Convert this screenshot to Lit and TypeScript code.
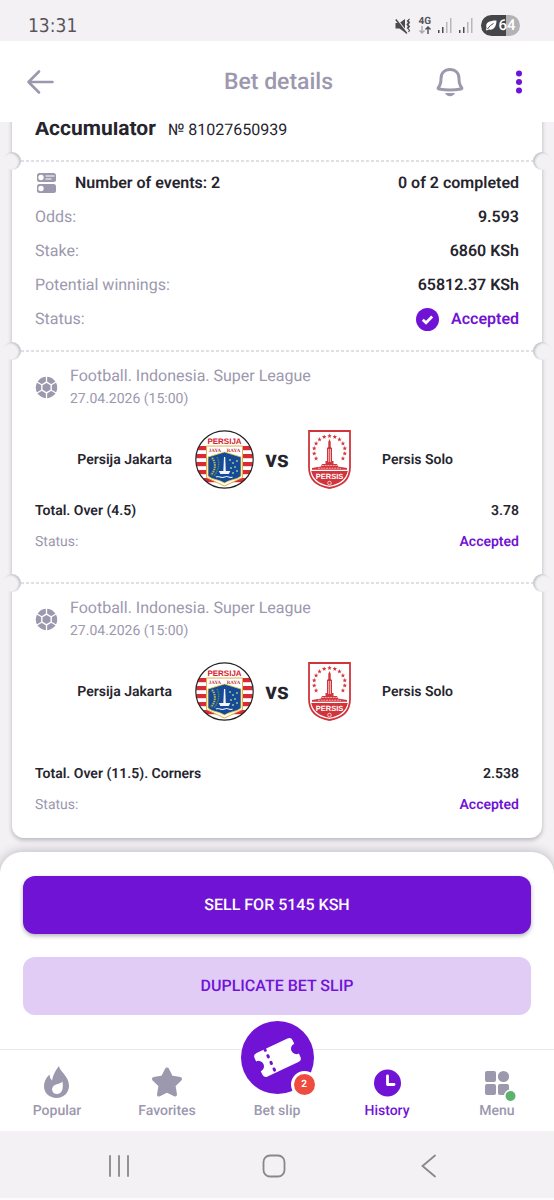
import { LitElement, html, css, svg, nothing } from "lit";
import { customElement, property } from "lit/decorators.js";

interface BetEvent {
  league: string;
  date: string;
  home: string;
  away: string;
  market: string;
  odds: string;
  status: string;
  tall?: boolean;
}

const EVENTS: BetEvent[] = [
  {
    league: "Football. Indonesia. Super League",
    date: "27.04.2026 (15:00)",
    home: "Persija Jakarta",
    away: "Persis Solo",
    market: "Total. Over (4.5)",
    odds: "3.78",
    status: "Accepted",
  },
  {
    league: "Football. Indonesia. Super League",
    date: "27.04.2026 (15:00)",
    home: "Persija Jakarta",
    away: "Persis Solo",
    market: "Total. Over (11.5). Corners",
    odds: "2.538",
    status: "Accepted",
    tall: true,
  },
];

const polar = (r: number, deg: number, cx = 0, cy = 0) => {
  const a = (deg * Math.PI) / 180;
  return `${(cx + r * Math.cos(a)).toFixed(2)},${(cy + r * Math.sin(a)).toFixed(2)}`;
};

const star = (cx: number, cy: number, r: number) =>
  Array.from({ length: 10 }, (_, i) => polar(i % 2 ? r * 0.42 : r, -90 + i * 36, cx, cy)).join(" ");

const base = css`
  :host {
    display: block;
    font-family: Roboto, "Liberation Sans", sans-serif;
    text-rendering: geometricPrecision;
  }
  * {
    box-sizing: border-box;
  }
  svg {
    display: block;
    overflow: visible;
  }
  button {
    font: inherit;
    color: inherit;
    background: none;
    border: 0;
    padding: 0;
    margin: 0;
    cursor: pointer;
    text-rendering: inherit;
  }
`;

@customElement("status-bar")
export class StatusBar extends LitElement {
  static styles = [
    base,
    css`
      .bar {
        display: flex;
        align-items: center;
        justify-content: space-between;
        height: 41px;
        padding: 10px 34px 0 28px;
        background: #f3f1f4;
        color: #56555a;
      }
      .time {
        font: 19px/22px "DejaVu Sans Condensed", "DejaVu Sans", sans-serif;
      }
      .icons {
        display: flex;
        align-items: center;
        gap: 7px;
      }
      .net {
        display: grid;
        justify-items: center;
        font-size: 10px;
        line-height: 9px;
        font-weight: 700;
      }
      .battery {
        display: flex;
        align-items: center;
        justify-content: center;
        gap: 1px;
        width: 39px;
        height: 21px;
        margin-left: 1px;
        border-radius: 11px;
        background: linear-gradient(90deg, #464549 64%, #b3b2b5 64%);
        color: #fff;
        font-size: 15px;
        font-weight: 500;
        line-height: 21px;
      }
    `,
  ];

  private signal(full: number) {
    return html`<svg width="14" height="15" viewBox="0 0 14 15" aria-hidden="true">
      ${[3, 6, 11, 15].map(
        (h, i) => svg`<rect x=${i * 4} y=${15 - h} width="1.5" height=${h} fill=${i < full ? "#4b4a4e" : "#b9b7bb"}/>`
      )}
    </svg>`;
  }

  render() {
    return html`<div class="bar">
      <time class="time">13:31</time>
      <div class="icons">
        <svg width="16" height="16" viewBox="0 0 16 16" fill="none" stroke="#4b4a4e" aria-label="Muted">
          <path d="M.5 5h4L10 1v13.500L4.500 10.500h-4z" fill="#4b4a4e" stroke="none" />
          <path d="M1.500 1l11 14" stroke="#f3f1f4" stroke-width="1.500" />
          <path d="M.8 1.500l11 14" stroke-width="1.500" />
          <path d="M12 2.500l1.500 2-1.500 2 1.500 2-1.500 2M14.500 1l-1.500 1.500 1.500 2-1.500 2 1.500 2-1.500 2 1.500 2-1 1.500" stroke-width="1.100" />
        </svg>
        <div class="net">
          <span>4G</span>
          <svg width="12" height="8" viewBox="0 0 12 8" fill="none" stroke-width="1.400">
            <path d="M3 0v7M.5 4.500L3 7l2.500-2.500" stroke="#aaa8ac" />
            <path d="M9 8V1M6.500 3.500L9 1l2.500 2.500" stroke="#4b4a4e" />
          </svg>
        </div>
        ${this.signal(2)} ${this.signal(2)}
        <div class="battery">
          <svg width="12" height="11" viewBox="0 0 12 11" aria-hidden="true">
            <path d="M1.500 7.500C0 3 4 .5 11.500.5 11.500 6 9 10.500 4 9.500L1 10.500z" fill="#fff" />
            <path d="M2.500 9C4.500 6 6 5 8.500 3.500" stroke="#464549" fill="none" />
          </svg>
          <span>64</span>
        </div>
      </div>
    </div>`;
  }
}

@customElement("page-header")
export class PageHeader extends LitElement {
  static styles = [
    base,
    css`
      .header {
        display: grid;
        grid-template-columns: 1fr auto 1fr;
        align-items: center;
        height: 81px;
        padding: 0 24px 0 27px;
        background: #fff;
        color: #9c98ae;
      }
      .title {
        margin: 0;
        font-size: 23px;
        line-height: 28px;
        font-weight: 500;
      }
      .back {
        justify-self: start;
      }
      .actions {
        display: flex;
        align-items: center;
        justify-content: flex-end;
        gap: 44px;
      }
    `,
  ];

  render() {
    return html`<header class="header">
      <button class="back" aria-label="Back">
        <svg width="27" height="24" viewBox="0 0 27 24" fill="none" stroke="currentColor" stroke-width="2.600" stroke-linecap="round" stroke-linejoin="round">
          <path d="M25.500 12H1.500M12 1.500L1.500 12 12 22.500" />
        </svg>
      </button>
      <h1 class="title">Bet details</h1>
      <div class="actions">
        <button aria-label="Notifications">
          <svg width="28" height="30" viewBox="0 0 28 30" fill="none" stroke="currentColor" stroke-width="3" stroke-linejoin="round">
            <path d="M14 2.500c-5.400 0-9 3.600-9 9 0 4.800-.8 7-2.600 9-.7.900-.2 1.400.7 1.600 7.100 1.300 14.700 1.300 21.800 0 .9-.2 1.400-.7.700-1.600-1.800-2-2.600-4.200-2.600-9 0-5.400-3.600-9-9-9z" />
            <path d="M9 26h10c-.8 2-2.500 3.200-5 3.200S9.800 28 9 26z" fill="currentColor" stroke="none" />
          </svg>
        </button>
        <button aria-label="More options">
          <svg width="22" height="26" viewBox="0 0 22 26" fill="#7113d5">
            <circle cx="11" cy="4.500" r="3" />
            <circle cx="11" cy="13" r="3" />
            <circle cx="11" cy="21.500" r="3" />
          </svg>
        </button>
      </div>
    </header>`;
  }
}

@customElement("team-crest")
export class TeamCrest extends LitElement {
  @property() team = "";

  static styles = [
    base,
    css`
      .name {
        font-family: "Liberation Sans", sans-serif;
        font-weight: 700;
        text-anchor: middle;
      }
      .motto {
        font-family: "Liberation Serif", serif;
        font-weight: 700;
        text-anchor: middle;
      }
    `,
  ];

  private persija() {
    return html`<svg width="59" height="59" viewBox="0 0 59 59" role="img" aria-label="Persija Jakarta">
      <defs><clipPath id="disc"><circle cx="29.500" cy="29.500" r="28.500" /></clipPath></defs>
      <g clip-path="url(#disc)">
        <rect width="59" height="59" fill="#fff" />
        ${[16, 24, 32, 40, 48].map((y) => svg`<rect x="0" y=${y} width="59" height="4.200" fill="#d92b35"/>`)}
        <path d="M11.500 16h36v31.500L29.500 56l-18-8.500z" fill="#fff" stroke="#e0b04a" stroke-width="1" />
      </g>
      <path d="M13 27L29.500 22 46 27V46c-4 4-10 3-16.500 7C23 49 17 50 13 46z" fill="#174a96" stroke="#e5cf3c" stroke-width=".8" />
      <path d="M17 28c4 4 4 12-1 17" fill="none" stroke="#b8b653" stroke-width="2" stroke-dasharray="1.500 .8" />
      <path d="M22 27c3 5 2 13-3 19" fill="none" stroke="#4f8d5c" stroke-width="1.400" stroke-dasharray="1.500 .8" />
      <path d="M29 27h1.200l.6 14h4.500l-1.500 3h-8.500l-1.500-3h4.500z" fill="#f2f5fa" />
      <path d="M21 47c3-2 5 2 8.500 0s5 2 8 0" fill="none" stroke="#dce7f6" stroke-width="1.200" />
      ${[[35, 30], [38, 33], [40, 37], [36, 38], [42, 41], [38, 43], [42, 31]].map(
        ([x, y]) => svg`<circle cx=${x} cy=${y} r="1.100" fill="#8fbf8c"/>`
      )}
      <text class="name" x="29.500" y="14" font-size="8" fill="#d3202c">PERSIJA</text>
      <text class="motto" x="20" y="21.500" font-size="5" fill="#c23a3a">JAYA</text>
      <text class="motto" x="38.500" y="21.500" font-size="5" fill="#c23a3a">RAYA</text>
      <circle cx="29.500" cy="29.500" r="28.700" fill="none" stroke="#222" stroke-width="1.200" />
    </svg>`;
  }

  private persis() {
    const red = "#d2343c";
    return html`<svg width="59" height="59" viewBox="0 0 59 59" role="img" aria-label="Persis Solo">
      <path d="M9 1h41v36c0 12-8 19-20.500 21C17 56 9 49 9 37z" fill="#fff" stroke=${red} stroke-width="1.800" />
      <path d="M11.200 41h36.600c-1.800 8-8 13-18.300 14.800C19.200 54 13 49 11.200 41z" fill=${red} />
      ${Array.from({ length: 13 }, (_, i) => {
        const a = ((150 + i * 20) * Math.PI) / 180;
        return svg`<polygon points=${star(29.5 + 15.5 * Math.cos(a), 21 + 15 * Math.sin(a), 2.4)} fill=${red}/>`;
      })}
      <path d="M29.500 9l1.200 3v5l1.300 1v13h1.500v3h3.500l1 2.500 9 1.500v1.800H12V38l9-1.500 1-2.500h3.500v-3H27V18l1.300-1v-5z" fill=${red} />
      <path d="M28.700 19v13M30.400 19v13" stroke="#fff" stroke-width=".7" />
      <path d="M22 35.500h15M18 38.200h23" stroke="#fff" stroke-width=".6" stroke-dasharray="2 .7" />
      <text class="name" x="29.500" y="49" font-size="7.500" fill="#fff">PERSIS</text>
      <circle cx="29.500" cy="53" r="1.800" fill="none" stroke="#fff" stroke-width=".7" />
    </svg>`;
  }

  render() {
    return this.team === "Persija Jakarta" ? this.persija() : this.persis();
  }
}

@customElement("tear-line")
export class TearLine extends LitElement {
  static styles = [
    base,
    css`
      .line {
        position: relative;
        height: 2px;
        padding: 0 9px;
      }
      .dots {
        height: 2px;
        background: repeating-linear-gradient(90deg, #dfdfe5 0 3px, transparent 3px 5px);
      }
      .notch {
        position: absolute;
        top: -8px;
        width: 18px;
        height: 18px;
        border-radius: 50%;
        background: #f2f1f4;
      }
      .left {
        left: -9px;
        box-shadow: inset -2px 1px 2px #c9c8cd;
      }
      .right {
        right: -9px;
        box-shadow: inset 2px 1px 2px #c9c8cd;
      }
    `,
  ];

  render() {
    return html`<div class="line">
      <div class="dots"></div>
      <span class="notch left"></span>
      <span class="notch right"></span>
    </div>`;
  }
}

@customElement("event-item")
export class EventItem extends LitElement {
  @property({ attribute: false }) event!: BetEvent;

  static styles = [
    base,
    css`
      .event {
        padding: 12px 23px 24px;
        color: #26252e;
      }
      .event.tall {
        padding-bottom: 17px;
      }
      .head {
        display: flex;
        align-items: center;
        gap: 12px;
        color: #9c98ae;
      }
      .league {
        margin: 0;
        font-size: 16px;
        line-height: 24px;
        font-weight: 400;
      }
      .date {
        display: block;
        font-size: 14px;
        line-height: 22px;
      }
      .teams {
        display: grid;
        grid-template-columns: 1fr 59px 46px 59px 1fr;
        align-items: center;
        margin: 20px 0 7px;
        font-size: 14px;
        line-height: 20px;
        font-weight: 600;
      }
      .tall .teams {
        margin-bottom: 38px;
      }
      .home {
        text-align: right;
        padding-right: 23px;
      }
      .away {
        padding-left: 23px;
      }
      .vs {
        text-align: center;
        font-size: 23px;
        font-weight: 700;
      }
      .row {
        display: flex;
        justify-content: space-between;
        font-size: 14px;
        line-height: 31px;
        font-weight: 600;
      }
      .muted {
        color: #9c98ae;
        font-weight: 400;
      }
      .accent {
        color: #7113d5;
      }
    `,
  ];

  render() {
    const e = this.event;
    return html`<section class=${e.tall ? "event tall" : "event"}>
      <div class="head">
        <svg width="23" height="23" viewBox="-11.500 -11.500 23 23" aria-hidden="true">
          <circle r="10.700" fill="#9c98ae" />
          <polygon points=${[0, 60, 120, 180, 240, 300].map((d) => polar(6.2, d + 30)).join(" ")} fill="#fff" />
          ${[30, 90, 150, 210, 270, 330].map(
            (d) => svg`<line x1=${polar(4, d).split(",")[0]} y1=${polar(4, d).split(",")[1]} x2=${polar(12, d).split(",")[0]} y2=${polar(12, d).split(",")[1]} stroke="#fff" stroke-width="1.300"/>`
          )}
          <polygon points=${[0, 60, 120, 180, 240, 300].map((d) => polar(4.6, d + 30)).join(" ")} fill="#9c98ae" />
        </svg>
        <div>
          <h2 class="league">${e.league}</h2>
          <time class="date">${e.date}</time>
        </div>
      </div>
      <div class="teams">
        <span class="home">${e.home}</span>
        <team-crest .team=${e.home}></team-crest>
        <span class="vs">vs</span>
        <team-crest .team=${e.away}></team-crest>
        <span class="away">${e.away}</span>
      </div>
      <div class="row"><span>${e.market}</span><span>${e.odds}</span></div>
      <div class="row"><span class="muted">Status:</span><span class="accent">${e.status}</span></div>
    </section>`;
  }
}

@customElement("bet-card")
export class BetCard extends LitElement {
  static styles = [
    base,
    css`
      .card {
        margin: -5px 12px 14px;
        border-radius: 0 0 12px 12px;
        background: #fff;
        box-shadow: 0 2px 4px rgba(40, 36, 52, 0.3);
        color: #26252e;
      }
      .head {
        display: flex;
        align-items: baseline;
        gap: 12px;
        padding: 0 23px 18px;
        line-height: 24px;
      }
      .kind {
        margin: 0;
        font-size: 21px;
        font-weight: 700;
        line-height: 24px;
      }
      .number {
        font-size: 16px;
      }
      .summary {
        margin: 0;
        padding: 4px 23px 14px;
        font-size: 16px;
        line-height: 34px;
      }
      .row {
        display: flex;
        justify-content: space-between;
      }
      dt {
        color: #9c98ae;
      }
      dd {
        margin: 0;
        font-weight: 600;
      }
      .events {
        display: flex;
        align-items: center;
        gap: 18px;
        color: #26252e;
        font-weight: 600;
      }
      .status {
        display: flex;
        align-items: center;
        gap: 12px;
        color: #7113d5;
      }
    `,
  ];

  render() {
    return html`<article class="card">
      <div class="head">
        <h2 class="kind">Accumulator</h2>
        <span class="number">№ 81027650939</span>
      </div>
      <tear-line></tear-line>
      <dl class="summary">
        <div class="row">
          <dt class="events">
            <svg width="22" height="20" viewBox="0 0 22 20" aria-hidden="true">
              <rect x="2" y="0" width="19" height="9" rx="2.500" fill="#9c98ae" />
              <circle cx="6" cy="4.500" r="2.700" fill="#fff" />
              <path d="M10.500 3h9M10.500 6h6" stroke="#fff" stroke-width="1.200" />
              <rect x="2" y="11" width="19" height="9" rx="2.500" fill="#9c98ae" />
              <circle cx="6" cy="15.500" r="2.700" fill="#fff" />
            </svg>
            Number of events: 2
          </dt>
          <dd>0 of 2 completed</dd>
        </div>
        <div class="row"><dt>Odds:</dt><dd>9.593</dd></div>
        <div class="row"><dt>Stake:</dt><dd>6860 KSh</dd></div>
        <div class="row"><dt>Potential winnings:</dt><dd>65812.37 KSh</dd></div>
        <div class="row">
          <dt>Status:</dt>
          <dd class="status">
            <svg width="23" height="23" viewBox="0 0 23 23" aria-hidden="true">
              <circle cx="11.500" cy="11.500" r="11.500" fill="#7113d5" />
              <path d="M6.800 11.800l3.200 3 6.200-6.300" fill="none" stroke="#fff" stroke-width="2.700" />
            </svg>
            Accepted
          </dd>
        </div>
      </dl>
      ${EVENTS.map((e) => html`<tear-line></tear-line><event-item .event=${e}></event-item>`)}
    </article>`;
  }
}

@customElement("bottom-nav")
export class BottomNav extends LitElement {
  static styles = [
    base,
    css`
      .nav {
        position: relative;
        display: grid;
        grid-template-columns: repeat(5, 1fr);
        align-items: end;
        height: 82px;
        padding: 0 2px;
        border-top: 1px solid #e9e8ec;
        background: #fff;
      }
      .item {
        display: flex;
        flex-direction: column;
        align-items: center;
        gap: 5px;
        padding-bottom: 12px;
        color: #9c98ae;
        font-size: 14px;
        line-height: 16px;
        font-weight: 500;
        text-decoration: none;
      }
      .active {
        color: #7113d5;
      }
      .main {
        gap: 9px;
        margin-top: -29px;
      }
      .icon {
        position: relative;
      }
      .badge {
        position: absolute;
        right: -4px;
        bottom: -4px;
        width: 27px;
        height: 27px;
        border: 3px solid #fff;
        border-radius: 50%;
        background: #ee4c3e;
        color: #fff;
        font-size: 10px;
        line-height: 21px;
        font-weight: 700;
        text-align: center;
      }
    `,
  ];

  private item(label: string, icon: unknown, cls = "", badge: unknown = nothing) {
    return html`<a class="item ${cls}" href="#"><span class="icon">${icon}${badge}</span>${label}</a>`;
  }

  render() {
    return html`<nav class="nav">
      ${this.item(
        "Popular",
        html`<svg width="32" height="32" viewBox="0 0 32 32" fill="currentColor">
          <path d="M18 0c.5 5 10 10.500 10 19.500C28 27 22.500 32 15.500 32S3 27 3 20.500C3 16 4.500 12 8.500 8.500c.3 2.500 1 4.500 2.500 6C12 9 14.500 4 18 0z" />
          <path d="M21.500 15.500c.8 6 .5 11.500-5 12.500-5 .5-7-5-4-8 2.500-2.500 6.500-1.500 9-4.500z" fill="#fff" />
        </svg>`
      )}
      ${this.item(
        "Favorites",
        html`<svg width="32" height="32" viewBox="0 0 32 32" fill="currentColor" stroke="currentColor" stroke-width="4" stroke-linejoin="round">
          <path d="M16 3.500l4 8 9 1.500-6.500 6.300L24 28.500 16 24.400 8 28.500l1.500-9.200L3 13l9-1.500z" />
        </svg>`
      )}
      ${this.item(
        "Bet slip",
        html`<svg width="73" height="73" viewBox="-36.500 -36.500 73 73">
          <circle r="36.500" fill="#7113d5" />
          <g transform="rotate(-25)">
            <path d="M-17-13h34a4 4 0 0 1 4 4v3.500a5.500 5.500 0 0 0 0 11V9a4 4 0 0 1-4 4h-34a4 4 0 0 1-4-4V5.500a5.500 5.500 0 0 0 0-11V-9a4 4 0 0 1 4-4z" fill="#fff" />
            <path d="M-8-12.500v25" stroke="#7113d5" stroke-width="3" stroke-linecap="round" stroke-dasharray="1.300 6" stroke-dashoffset=".5" />
          </g>
        </svg>`,
        "main",
        html`<span class="badge">2</span>`
      )}
      ${this.item(
        "History",
        html`<svg width="32" height="32" viewBox="0 0 32 32">
          <circle cx="16.500" cy="17" r="13.500" fill="currentColor" />
          <path d="M16.500 10v8.500h6.500" fill="none" stroke="#fff" stroke-width="2.800" stroke-linecap="round" stroke-linejoin="round" />
        </svg>`,
        "active"
      )}
      ${this.item(
        "Menu",
        html`<svg width="32" height="32" viewBox="0 0 32 32" fill="currentColor">
          <rect x="4" y="5" width="11" height="11" rx="2" />
          <circle cx="22.500" cy="10.500" r="5.600" />
          <rect x="4" y="18" width="11" height="11" rx="2" />
          <rect x="17" y="18" width="11" height="11" rx="2" />
          <circle cx="29.500" cy="30" r="6.500" fill="#fff" />
          <circle cx="29.500" cy="30" r="5" fill="#5db26c" />
        </svg>`
      )}
    </nav>`;
  }
}

@customElement("system-bar")
export class SystemBar extends LitElement {
  static styles = [
    base,
    css`
      .bar {
        display: grid;
        grid-template-columns: repeat(3, 1fr);
        align-items: center;
        justify-items: center;
        height: 69px;
        padding: 2px 47px 0 41px;
        border-bottom: 2px solid #fcfbfd;
        background: #f3f1f4;
      }
    `,
  ];

  render() {
    return html`<div class="bar">
      <button aria-label="Recent apps">
        <svg width="24" height="24" viewBox="0 0 24 24" stroke="#88878b" stroke-width="1.800" stroke-linecap="round"><path d="M3 2v20M12 2v20M21 2v20" /></svg>
      </button>
      <button aria-label="Home">
        <svg width="24" height="24" viewBox="0 0 24 24" fill="none" stroke="#88878b" stroke-width="1.800"><rect x="1.500" y="1.500" width="21" height="21" rx="6.500" /></svg>
      </button>
      <button aria-label="Back">
        <svg width="24" height="24" viewBox="0 0 24 24" fill="none" stroke="#88878b" stroke-width="1.800" stroke-linecap="round"><path d="M18 1.500L5.500 12 18 22.500" /></svg>
      </button>
    </div>`;
  }
}

@customElement("app-root")
export class AppRoot extends LitElement {
  static styles = [
    base,
    css`
      :host {
        display: flex;
        flex-direction: column;
        min-height: 100vh;
        background: #f3f1f4;
      }
      .content {
        flex: 1;
        overflow: hidden;
      }
      .panel {
        display: flex;
        flex-direction: column;
        gap: 23px;
        padding: 24px 23px 34px;
        border-radius: 22px 22px 0 0;
        background: #fff;
        box-shadow: 0 0 12px rgba(40, 36, 52, 0.3);
      }
      .action {
        height: 58px;
        border-radius: 12px;
        background: #e0ccf5;
        color: #7113d5;
        font-size: 16px;
        line-height: 20px;
        font-weight: 500;
        text-transform: uppercase;
      }
      .primary {
        background: #7113d5;
        color: #fff;
        box-shadow: 0 2px 4px rgba(40, 36, 52, 0.35);
      }
    `,
  ];

  render() {
    return html`
      <status-bar></status-bar>
      <page-header></page-header>
      <main class="content"><bet-card></bet-card></main>
      <div class="panel">
        <button class="action primary">Sell for 5145 KSh</button>
        <button class="action">Duplicate bet slip</button>
      </div>
      <bottom-nav></bottom-nav>
      <system-bar></system-bar>
    `;
  }
}
